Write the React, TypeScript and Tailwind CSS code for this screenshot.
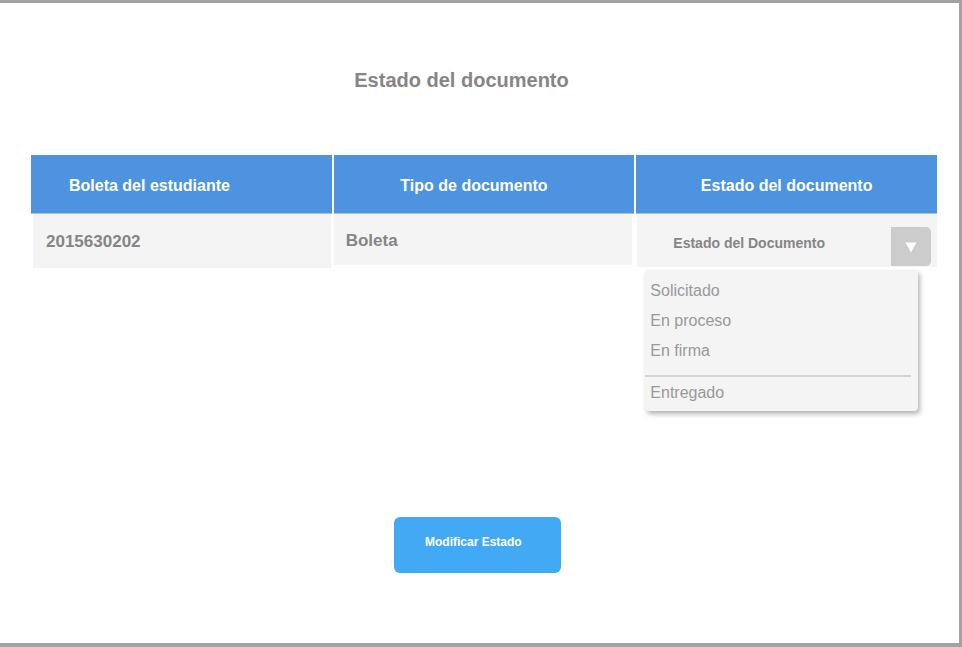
import React from "react";

const opciones = ["Solicitado", "En proceso", "En firma"];

export default function App() {
  return (
    <div
      className="w-[962px] h-[647px] bg-[#a2a2a2] pt-[3px] pr-[3px] pb-[4px]"
      style={{ fontFamily: '"Liberation Sans", Arial, sans-serif' }}
    >
      <div className="h-full w-full bg-white flex flex-col">
        {/* Title */}
        <h1 className="mt-[66px] pr-[36px] text-center text-[20px] leading-[23px] font-bold text-[#858585]">
          Estado del documento
        </h1>

        {/* Table */}
        <div className="mt-[63px] ml-[31px] w-[906px] grid grid-cols-3 gap-x-[2px]">
          <div className="h-[59px] bg-[#4e93e0] border-b border-[#9cc2ee] flex items-center pt-[3px] pl-[38px] text-white font-bold text-[16px]">
            Boleta del estudiante
          </div>
          <div className="h-[59px] bg-[#4e93e0] border-b border-[#9cc2ee] flex items-center justify-center pt-[3px] pr-[20px] text-white font-bold text-[16px]">
            Tipo de documento
          </div>
          <div className="h-[59px] bg-[#4e93e0] border-b border-[#9cc2ee] flex items-center justify-center pt-[3px] text-white font-bold text-[16px]">
            Estado del documento
          </div>

          {/* Row */}
          <div className="ml-[2px] mr-[1px] h-[54px] bg-[#f4f4f4] flex items-center pl-[13px] pt-[2px] text-[17px] font-bold text-[#858585]">
            2015630202
          </div>
          <div className="mr-[2px] h-[51px] bg-[#f4f4f4] flex items-center pl-[12px] pt-[3px] text-[17px] font-bold text-[#858585]">
            Boleta
          </div>
          <div className="relative ml-[1px] h-[53px] bg-[#f4f4f4]">
            <div className="flex items-start pt-[13px]">
              <span className="ml-[36px] mt-[8px] text-[14px] leading-[16px] font-bold text-[#858585]">
                Estado del Documento
              </span>
              <div className="ml-auto mr-[6px] w-[40px] h-[39px] bg-[#cccccc] rounded-r-[5px] flex items-center justify-center">
                <svg width="12" height="12" viewBox="0 0 12 12">
                  <path d="M0.5 1.5 L11.5 1.5 L6 11.5 Z" fill="#ffffff" />
                </svg>
              </div>
            </div>

            {/* Dropdown menu */}
            <div className="absolute left-[8px] top-[56px] w-[273px] h-[141px] bg-[#f4f4f4] rounded-[4px] shadow-[2px_3px_5px_rgba(0,0,0,0.3)] pt-[6px] z-10">
              {opciones.map((o) => (
                <div key={o} className="h-[30px] flex items-center pl-[5px] text-[16px] text-[#999999]">
                  {o}
                </div>
              ))}
              <div className="mt-[9px] mr-[7px] h-[2px] bg-[#d2d2d2]" />
              <div className="h-[30px] flex items-center pl-[5px] pt-[1px] text-[16px] text-[#999999]">
                Entregado
              </div>
            </div>
          </div>
        </div>

        {/* Action */}
        <button className="mt-[249px] ml-[394px] w-[167px] h-[56px] bg-[#42a9f5] rounded-[6px] text-left pl-[31px] pb-[6px] text-white font-bold text-[12px]">
          Modificar Estado
        </button>
      </div>
    </div>
  );
}
